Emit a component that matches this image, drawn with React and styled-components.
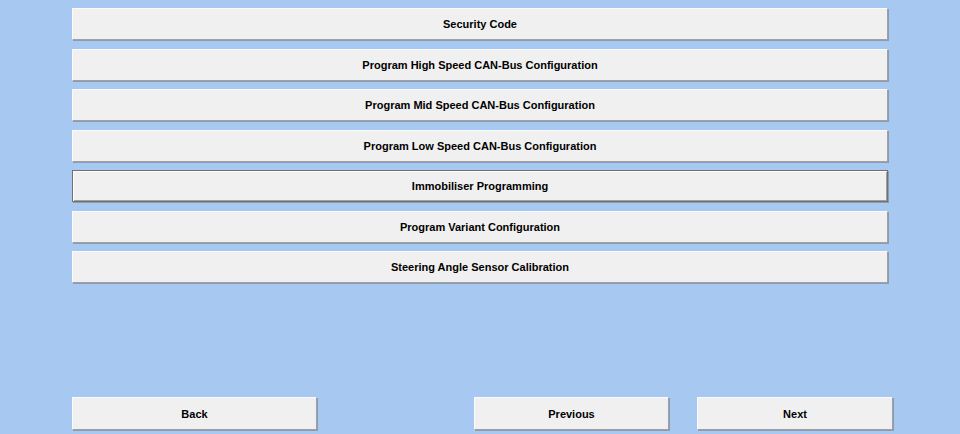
import styled, { createGlobalStyle, css } from "styled-components";

const GlobalStyle = createGlobalStyle`
  html, body {
    margin: 0;
    padding: 0;
    height: 100%;
    background: #a7c9f1;
    font-family: "Liberation Sans", Arial, sans-serif;
  }
  #root {
    height: 100%;
  }
`;

const Page = styled.div`
  display: flex;
  flex-direction: column;
  justify-content: space-between;
  box-sizing: border-box;
  height: 100%;
  padding: 8px 0 4px 72px;
`;

const MenuList = styled.div`
  display: flex;
  flex-direction: column;
  gap: 8.5px;
  width: 816px;
`;

const ActionButton = styled.button`
  box-sizing: border-box;
  height: ${(p) => p.$height || "32px"};
  width: ${(p) => p.$width || "100%"};
  margin: 0;
  padding: 0;
  background: #f0f0f0;
  border: none;
  border-top: 1px solid #fbfbfb;
  border-left: 1px solid #fbfbfb;
  border-right: 1px solid #a0a0a0;
  border-bottom: 1px solid #a0a0a0;
  box-shadow: 1px 1px 0 #8a9bb3;
  font-family: "Liberation Sans", Arial, sans-serif;
  font-size: 11px;
  font-weight: bold;
  color: #000;
  cursor: pointer;

  ${(p) =>
    p.$focused &&
    css`
      border: 1px solid #707070;
      box-shadow: inset 1px 1px 0 #fdfdfd, inset -1px -1px 0 #a0a0a0,
        1px 1px 0 #8a9bb3;
    `}
`;

const BottomRow = styled.div`
  display: flex;
  align-items: center;
  width: 821px;
`;

const Spacer = styled.div`
  flex: 1;
`;

const NavGroup = styled.div`
  display: flex;
  gap: 28px;
`;

const items = [
  "Security Code",
  "Program High Speed CAN-Bus Configuration",
  "Program Mid Speed CAN-Bus Configuration",
  "Program Low Speed CAN-Bus Configuration",
  "Immobiliser Programming",
  "Program Variant Configuration",
  "Steering Angle Sensor Calibration",
];

export default function App() {
  return (
    <>
      <GlobalStyle />
      <Page>
        <MenuList>
          {items.map((label) => (
            <ActionButton
              key={label}
              $focused={label === "Immobiliser Programming"}
            >
              {label}
            </ActionButton>
          ))}
        </MenuList>

        <BottomRow>
          <ActionButton $width="245px" $height="33px">
            Back
          </ActionButton>
          <Spacer />
          <NavGroup>
            <ActionButton $width="195px" $height="33px">
              Previous
            </ActionButton>
            <ActionButton $width="196px" $height="33px">
              Next
            </ActionButton>
          </NavGroup>
        </BottomRow>
      </Page>
    </>
  );
}
